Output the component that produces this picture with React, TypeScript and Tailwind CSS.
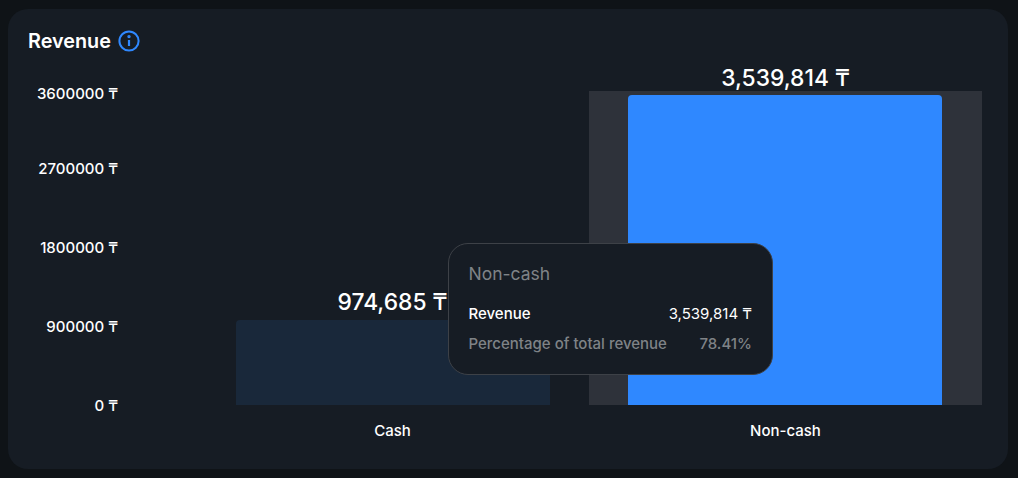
import React from "react"

const font = { fontFamily: "Inter, 'Noto Sans', sans-serif" }

const ticks = [
  { label: "3600000 ₸", gap: "mt-0" },
  { label: "2700000 ₸", gap: "mt-[55px]" },
  { label: "1800000 ₸", gap: "mt-[59px]" },
  { label: "900000 ₸", gap: "mt-[59px]" },
  { label: "0 ₸", gap: "mt-[59px]" },
]

const InfoIcon = () => (
  <svg width="22" height="22" viewBox="0 0 22 22" fill="none" stroke="#2f88ff" strokeWidth="2">
    <circle cx="11" cy="11" r="9.6" />
    <path d="M11 10v6" strokeWidth="2.2" />
    <circle cx="11" cy="6.6" r="0.7" fill="#2f88ff" />
  </svg>
)

const Bar = ({ value, height, color, active }: { value: string; height: string; color: string; active?: boolean }) => (
  <div className={`flex h-[314px] w-[393px] flex-col items-center justify-end ${active ? "bg-[#2e323a]" : ""}`}>
    <div className={`shrink-0 whitespace-nowrap text-[22.8px] leading-[28px] font-medium text-white ${active ? "mb-[3px]" : "mb-[4px]"}`}>
      {value}
    </div>
    <div className={`w-[314px] shrink-0 rounded-t-[4px] ${active ? "mr-[1px]" : ""} ${height} ${color}`} />
  </div>
)

export default function App() {
  return (
    <div className="h-[478px] w-[1018px] overflow-hidden bg-[#0f1317] pt-[9px] pl-[8px]" style={font}>
      <div className="relative h-[460px] w-[1000px] rounded-[20px] bg-[#161c24] pt-[18px] pl-[20px]">
        <div className="flex items-center gap-[7px]">
          <h2 className="text-[19.8px] leading-[28px] font-semibold text-white">Revenue</h2>
          <InfoIcon />
        </div>

        <div className="mt-[29px] flex">
          <div className="flex w-[90px] flex-col items-end text-[15px] leading-[20px] font-medium text-white">
            {ticks.map((t) => (
              <div key={t.label} className={`whitespace-nowrap ${t.gap}`}>
                {t.label}
              </div>
            ))}
          </div>
          <div className="ml-[78px] pt-[7px]">
            <div className="flex">
              <Bar value="974,685 ₸" height="h-[85px]" color="bg-[#19283a]" />
              <Bar value="3,539,814 ₸" height="h-[310px]" color="bg-[#2f88ff]" active />
            </div>
            <div className="mt-[16px] flex text-[15px] leading-[20px] font-medium text-white">
              <div className="w-[393px] text-center">Cash</div>
              <div className="w-[393px] text-center">Non-cash</div>
            </div>
          </div>
        </div>

        <div className="absolute top-[234px] left-[440px] h-[132px] w-[325px] rounded-[20px] border border-[#3d4147] bg-[#161c24] pt-[18px] pr-[20px] pl-[19.5px]">
          <div className="text-[17.5px] leading-[24px] text-[#7f8387]">Non-cash</div>
          <div className="mt-[18px] flex justify-between text-[15px] leading-[20px] text-white">
            <span className="font-medium">Revenue</span>
            <span>3,539,814 ₸</span>
          </div>
          <div className="mt-[10px] flex justify-between text-[15px] leading-[20px] font-medium text-[#7f8387]">
            <span>Percentage of total revenue</span>
            <span>78.41%</span>
          </div>
        </div>
      </div>
    </div>
  )
}
